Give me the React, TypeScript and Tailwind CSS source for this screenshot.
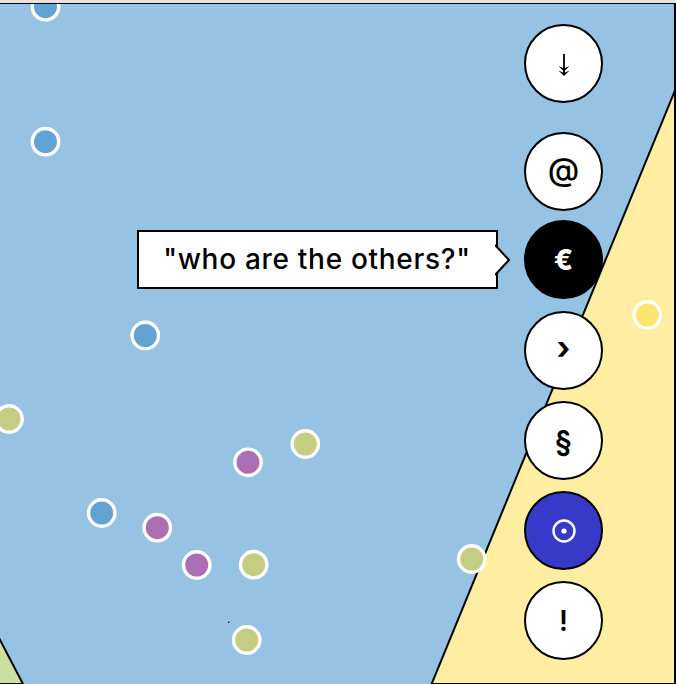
import React from "react";

const dots: { x: number; y: number; c: string }[] = [
  { x: 45.5, y: 6.7, c: "#62a3d4" },
  { x: 45.5, y: 141.7, c: "#62a3d4" },
  { x: 145.3, y: 335.5, c: "#62a3d4" },
  { x: 9, y: 419, c: "#c5cd83" },
  { x: 305.3, y: 444, c: "#c5cd83" },
  { x: 248, y: 462.3, c: "#ab6fb5" },
  { x: 101.7, y: 513, c: "#62a3d4" },
  { x: 157.3, y: 527.7, c: "#ab6fb5" },
  { x: 196.7, y: 565, c: "#ab6fb5" },
  { x: 253.7, y: 564.7, c: "#c5cd83" },
  { x: 246.7, y: 640, c: "#c5cd83" },
  { x: 471.7, y: 559, c: "#c5cd83" },
  { x: 647.3, y: 315, c: "#fde56f" },
];

function Btn({
  children,
  dark,
  blue,
  className = "",
}: {
  children: React.ReactNode;
  dark?: boolean;
  blue?: boolean;
  className?: string;
}) {
  const bg = dark
    ? "bg-black text-white"
    : blue
    ? "bg-[#3739c9] text-white"
    : "bg-white text-black";
  return (
    <div
      className={`w-[79px] h-[79px] rounded-full border-2 border-black flex items-center justify-center ${bg} ${className}`}
      style={{ fontFamily: "Inter, 'DejaVu Sans', sans-serif" }}
    >
      {children}
    </div>
  );
}

export default function App() {
  return (
    <div className="w-[676px] h-[684px] bg-[#e4e4e4] pt-[3px] overflow-hidden">
      <div className="relative h-[681px] border-t border-r-2 border-black bg-[#96c2e3] overflow-hidden">
        <svg
          className="absolute left-0 top-[-4px]"
          width={676}
          height={684}
          viewBox="0 0 676 684"
        >
          <polygon
            points="676,88 431.6,684 676,684"
            fill="#ffeea1"
            stroke="#000"
            strokeWidth={2}
          />
          <polygon
            points="-2,636 23,684 -2,684"
            fill="#cde0a1"
            stroke="#000"
            strokeWidth={2}
          />
          {dots.map((d, i) => (
            <circle
              key={i}
              cx={d.x}
              cy={d.y}
              r={13.2}
              fill={d.c}
              stroke="#fff"
              strokeWidth={3.4}
            />
          ))}
          <circle cx={228.7} cy={622.3} r={0.8} fill="#000" />
        </svg>

        {/* tooltip */}
        <div className="absolute left-[136.5px] top-[226px] w-[361px] h-[59px] bg-white border-2 border-black flex items-center justify-center">
          <span
            className="text-[28px] font-medium text-black tracking-[0.7px] pb-[1px]"
            style={{ fontFamily: "Inter, 'Noto Sans', sans-serif" }}
          >
            "who are the others?"
          </span>
          <svg
            className="absolute left-[356px] top-[11px]"
            width={18}
            height={34}
            viewBox="0 0 18 34"
          >
            <polygon points="0,2 14,17 0,32" fill="#fff" />
            <polyline
              points="0,2 14,17 0,32"
              fill="none"
              stroke="#000"
              strokeWidth={2}
            />
          </svg>
        </div>

        {/* buttons */}
        <div className="absolute left-[524px] top-[20px] flex flex-col">
          <Btn>
            <svg width={14} height={26} viewBox="0 0 14 26" className="mt-[4px]">
              <line x1={7} y1={1} x2={7} y2={21} stroke="#000" strokeWidth={1.8} />
              <polygon points="1.5,13 7,18.5 12.5,13 7,15.5" fill="#000" />
              <polygon points="1.5,17.5 7,23 12.5,17.5 7,20" fill="#000" />
            </svg>
          </Btn>
          <Btn className="mt-[29px]">
            <span className="text-[32px] font-medium leading-none pb-[3px]">@</span>
          </Btn>
          <Btn dark className="mt-[9px]">
            <span className="text-[28px] font-extrabold leading-none">€</span>
          </Btn>
          <Btn className="mt-[12px]">
            <span className="text-[32px] font-bold leading-none pb-[6px]">›</span>
          </Btn>
          <Btn className="mt-[11px]">
            <span className="text-[30px] font-semibold leading-none">§</span>
          </Btn>
          <Btn blue className="mt-[11px]">
            <svg width={26} height={26} viewBox="0 0 26 26">
              <circle cx={13} cy={13} r={10.5} fill="none" stroke="#fff" strokeWidth={2.4} />
              <circle cx={13} cy={13} r={2.6} fill="#fff" />
            </svg>
          </Btn>
          <Btn className="mt-[11px]">
            <span className="text-[28px] font-semibold leading-none">!</span>
          </Btn>
        </div>
      </div>
    </div>
  );
}
